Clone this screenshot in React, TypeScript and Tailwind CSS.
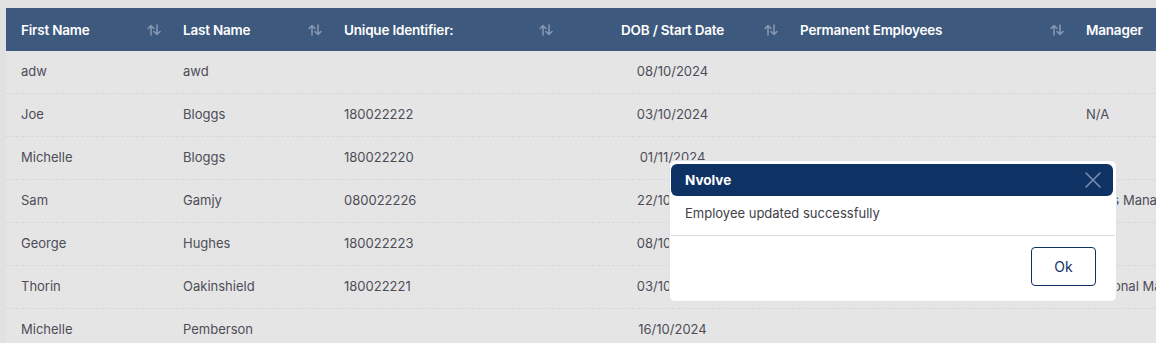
import React from "react";

const font = { fontFamily: '"Inter", "Noto Sans", sans-serif' };

function SortIcon() {
  return (
    <svg width="14" height="12" viewBox="0 0 14 12" fill="none" stroke="#8596b0" strokeWidth="1.6" strokeLinecap="round" strokeLinejoin="round">
      <path d="M4 11V1.5M1 4.5L4 1.5L7 4.5" />
      <path d="M10 1V10.5M7 7.5L10 10.5L13 7.5" />
    </svg>
  );
}

type Col = { label: string; w: number; center?: boolean; sort?: boolean };
const cols: Col[] = [
  { label: "First Name", w: 162, sort: true },
  { label: "Last Name", w: 161, sort: true },
  { label: "Unique Identifier:", w: 231, sort: true },
  { label: "DOB / Start Date", w: 225, center: true, sort: true },
  { label: "Permanent Employees", w: 286, sort: true },
  { label: "Manager", w: 200 },
];

const rows: string[][] = [
  ["adw", "awd", "", "08/10/2024", "", ""],
  ["Joe", "Bloggs", "180022222", "03/10/2024", "", "N/A"],
  ["Michelle", "Bloggs", "180022220", "01/11/2024", "", ""],
  ["Sam", "Gamjy", "080022226", "22/10/2024", "", "Sales Manager"],
  ["George", "Hughes", "180022223", "08/10/2024", "", ""],
  ["Thorin", "Oakinshield", "180022221", "03/10/2024", "", "Regional Manager"],
  ["Michelle", "Pemberson", "", "16/10/2024", "", ""],
];

export default function App() {
  return (
    <div className="relative w-[1156px] h-[343px] overflow-hidden bg-[#e1e1e1] pt-[8px] pl-[6px]" style={font}>
      <div className="w-[1265px] bg-[#e5e5e5]">
        <div className="flex h-[43px] bg-[#3d597d]">
          {cols.map((c, i) => (
            <div
              key={i}
              className={`relative flex items-center shrink-0 h-full pt-[1px] ${c.center ? "justify-center" : "pl-[15px]"}`}
              style={{ width: c.w }}
            >
              <span className="text-[13.5px] font-semibold text-white tracking-[-0.2px]">{c.label}</span>
              {c.sort && (
                <span className="absolute right-[7px] top-[16px]">
                  <SortIcon />
                </span>
              )}
            </div>
          ))}
        </div>
        {rows.map((r, ri) => (
          <div key={ri} className="flex h-[43px] border-b border-dashed border-[#d3d7df]">
            {r.map((v, ci) => (
              <div
                key={ci}
                className={`flex items-center shrink-0 h-full whitespace-nowrap ${cols[ci].center ? "justify-center" : "pl-[15px]"}`}
                style={{ width: cols[ci].w }}
              >
                <span className="text-[13px] text-[#4d4d58]">{v}</span>
              </div>
            ))}
          </div>
        ))}
      </div>

      <div className="absolute left-[669px] top-[160px] w-[448px] h-[142px] bg-white rounded-[6px] border border-[#dfe4ec] flex flex-col">
        <div className="mt-[3px] ml-[1px] mr-[3px] h-[32px] rounded-[6px] bg-[#0f3265] flex items-center justify-between pl-[14px] pr-[10px]">
          <span className="text-[13.5px] font-bold text-white">Nvolve</span>
          <svg width="20" height="20" viewBox="0 0 20 20" stroke="#7a8cab" strokeWidth="1.6" strokeLinecap="round">
            <path d="M3 3L17 17M17 3L3 17" />
          </svg>
        </div>
        <div className="h-[40px] border-b border-[#dcdcdc] mx-[1px] flex items-start pt-[8px] pl-[14px]">
          <span className="text-[13px] text-[#404048]">Employee updated successfully</span>
        </div>
        <div className="flex-1 flex justify-end pt-[11px] pr-[20px]">
          <button className="w-[65px] h-[39px] rounded-[4px] border border-[#0f3265] bg-white text-[14px] text-[#0f3265]">
            Ok
          </button>
        </div>
      </div>
    </div>
  );
}
